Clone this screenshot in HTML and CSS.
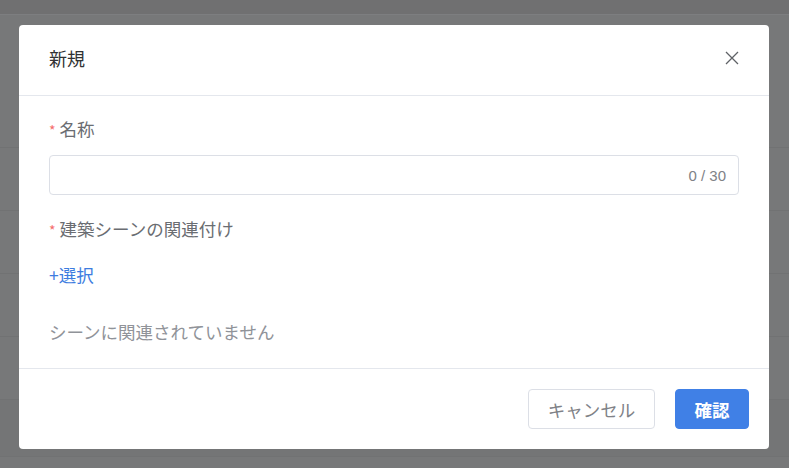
FILE: index.html
```html
<!DOCTYPE html>
<html lang="ja">
<head>
    <meta charset="UTF-8">
    <meta name="viewport" content="width=device-width, initial-scale=1.0">
    <title>新規</title>
    <link rel="stylesheet" href="styles.css">
</head>
<body>
    <!-- Page behind the modal (dimmed) -->
    <div class="page">
        <div class="page-top"></div>
        <div class="page-row tall"></div>
        <div class="page-row"></div>
        <div class="page-row"></div>
        <div class="page-row"></div>
        <div class="page-row"></div>
        <div class="page-row short"></div>
    </div>

    <div class="dialog">
        <div class="dialog-header">
            <span class="dialog-title">新規</span>
            <button class="dialog-close" aria-label="close">
                <svg width="14" height="14" viewBox="0 0 14 14">
                    <path d="M1 1 L13 13 M13 1 L1 13" stroke="#5f6266" stroke-width="1.3" fill="none"/>
                </svg>
            </button>
        </div>

        <div class="dialog-body">
            <div class="form-label"><span class="required">*</span>名称</div>
            <div class="input-wrap">
                <input type="text" class="input">
                <span class="input-count">0 / 30</span>
            </div>

            <div class="form-label second"><span class="required">*</span>建築シーンの関連付け</div>
            <a class="select-link">+選択</a>
            <p class="empty-text">シーンに関連されていません</p>
        </div>

        <div class="dialog-footer">
            <button class="btn btn-default">キャンセル</button>
            <button class="btn btn-primary">確認</button>
        </div>
    </div>
</body>
</html>
```

FILE: styles.css
```css
/* Base */
body {
    margin: 0;
    height: 468px;
    overflow: hidden;
    background: #777879;
    font-family: "Noto Sans CJK JP", "Noto Sans", sans-serif;
}

/* Dimmed page behind */
.page-top {
    height: 14px;
    background: #707071;
    border-bottom: 1px solid #7d7e80;
}

.page-row {
    height: 62px;
    border-bottom: 1px solid #717273;
}

.page-row.tall {
    height: 132px;
}

.page-row.short {
    height: 56px;
    background: #747576;
}

/* Dialog */
.dialog {
    position: absolute;
    left: 19px;
    top: 25px;
    width: 750px;
    height: 424px;
    background: #fff;
    border-radius: 4px;
    display: flex;
    flex-direction: column;
}

.dialog-header {
    height: 70px;
    padding: 0 30px;
    display: flex;
    align-items: center;
    justify-content: space-between;
    border-bottom: 1px solid #e4e7ed;
}

.dialog-title {
    font-size: 18px;
    color: #303133;
    margin-top: -4px;
}

.dialog-close {
    border: none;
    background: none;
    padding: 0;
    margin-top: -5px;
    display: flex;
}

.dialog-body {
    flex: 1;
    padding: 20px 30px 0;
}

.form-label {
    font-size: 17.5px;
    line-height: 26px;
    color: #6a6d72;
}

.form-label.second {
    margin-top: 21px;
}

.required {
    color: #f56c6c;
    font-size: 14px;
    margin-right: 4px;
    vertical-align: top;
    position: relative;
    top: 1px;
}

.input-wrap {
    margin-top: 13px;
    display: flex;
    align-items: center;
    height: 40px;
    border: 1px solid #dcdfe6;
    border-radius: 4px;
    box-sizing: border-box;
}

.input {
    flex: 1;
    border: none;
    outline: none;
    height: 100%;
    padding: 0 15px;
    background: transparent;
}

.input-count {
    font-family: "Liberation Sans", Arial, sans-serif;
    font-size: 15px;
    color: #808287;
    padding-right: 12px;
}

.select-link {
    display: block;
    margin-top: 20px;
    font-size: 17.5px;
    line-height: 26px;
    color: #3d7ce0;
}

.empty-text {
    margin: 31px 0 0;
    font-size: 17.5px;
    line-height: 26px;
    color: #909399;
}

/* Footer */
.dialog-footer {
    height: 81px;
    padding: 20px 20px 0;
    box-sizing: border-box;
    border-top: 1px solid #e4e7ed;
    display: flex;
    justify-content: flex-end;
    align-items: flex-start;
    gap: 20px;
}

.btn {
    height: 40px;
    border-radius: 4px;
    font-family: "Noto Sans CJK JP", sans-serif;
    font-size: 17.5px;
    padding: 0;
    cursor: pointer;
}

.btn-default {
    width: 127px;
    background: #fff;
    color: #808287;
    border: 1px solid #dcdfe6;
}

.btn-primary {
    width: 74px;
    background: #4080e6;
    color: #fff;
    border: 1px solid #4080e6;
    font-weight: 600;
}
```
